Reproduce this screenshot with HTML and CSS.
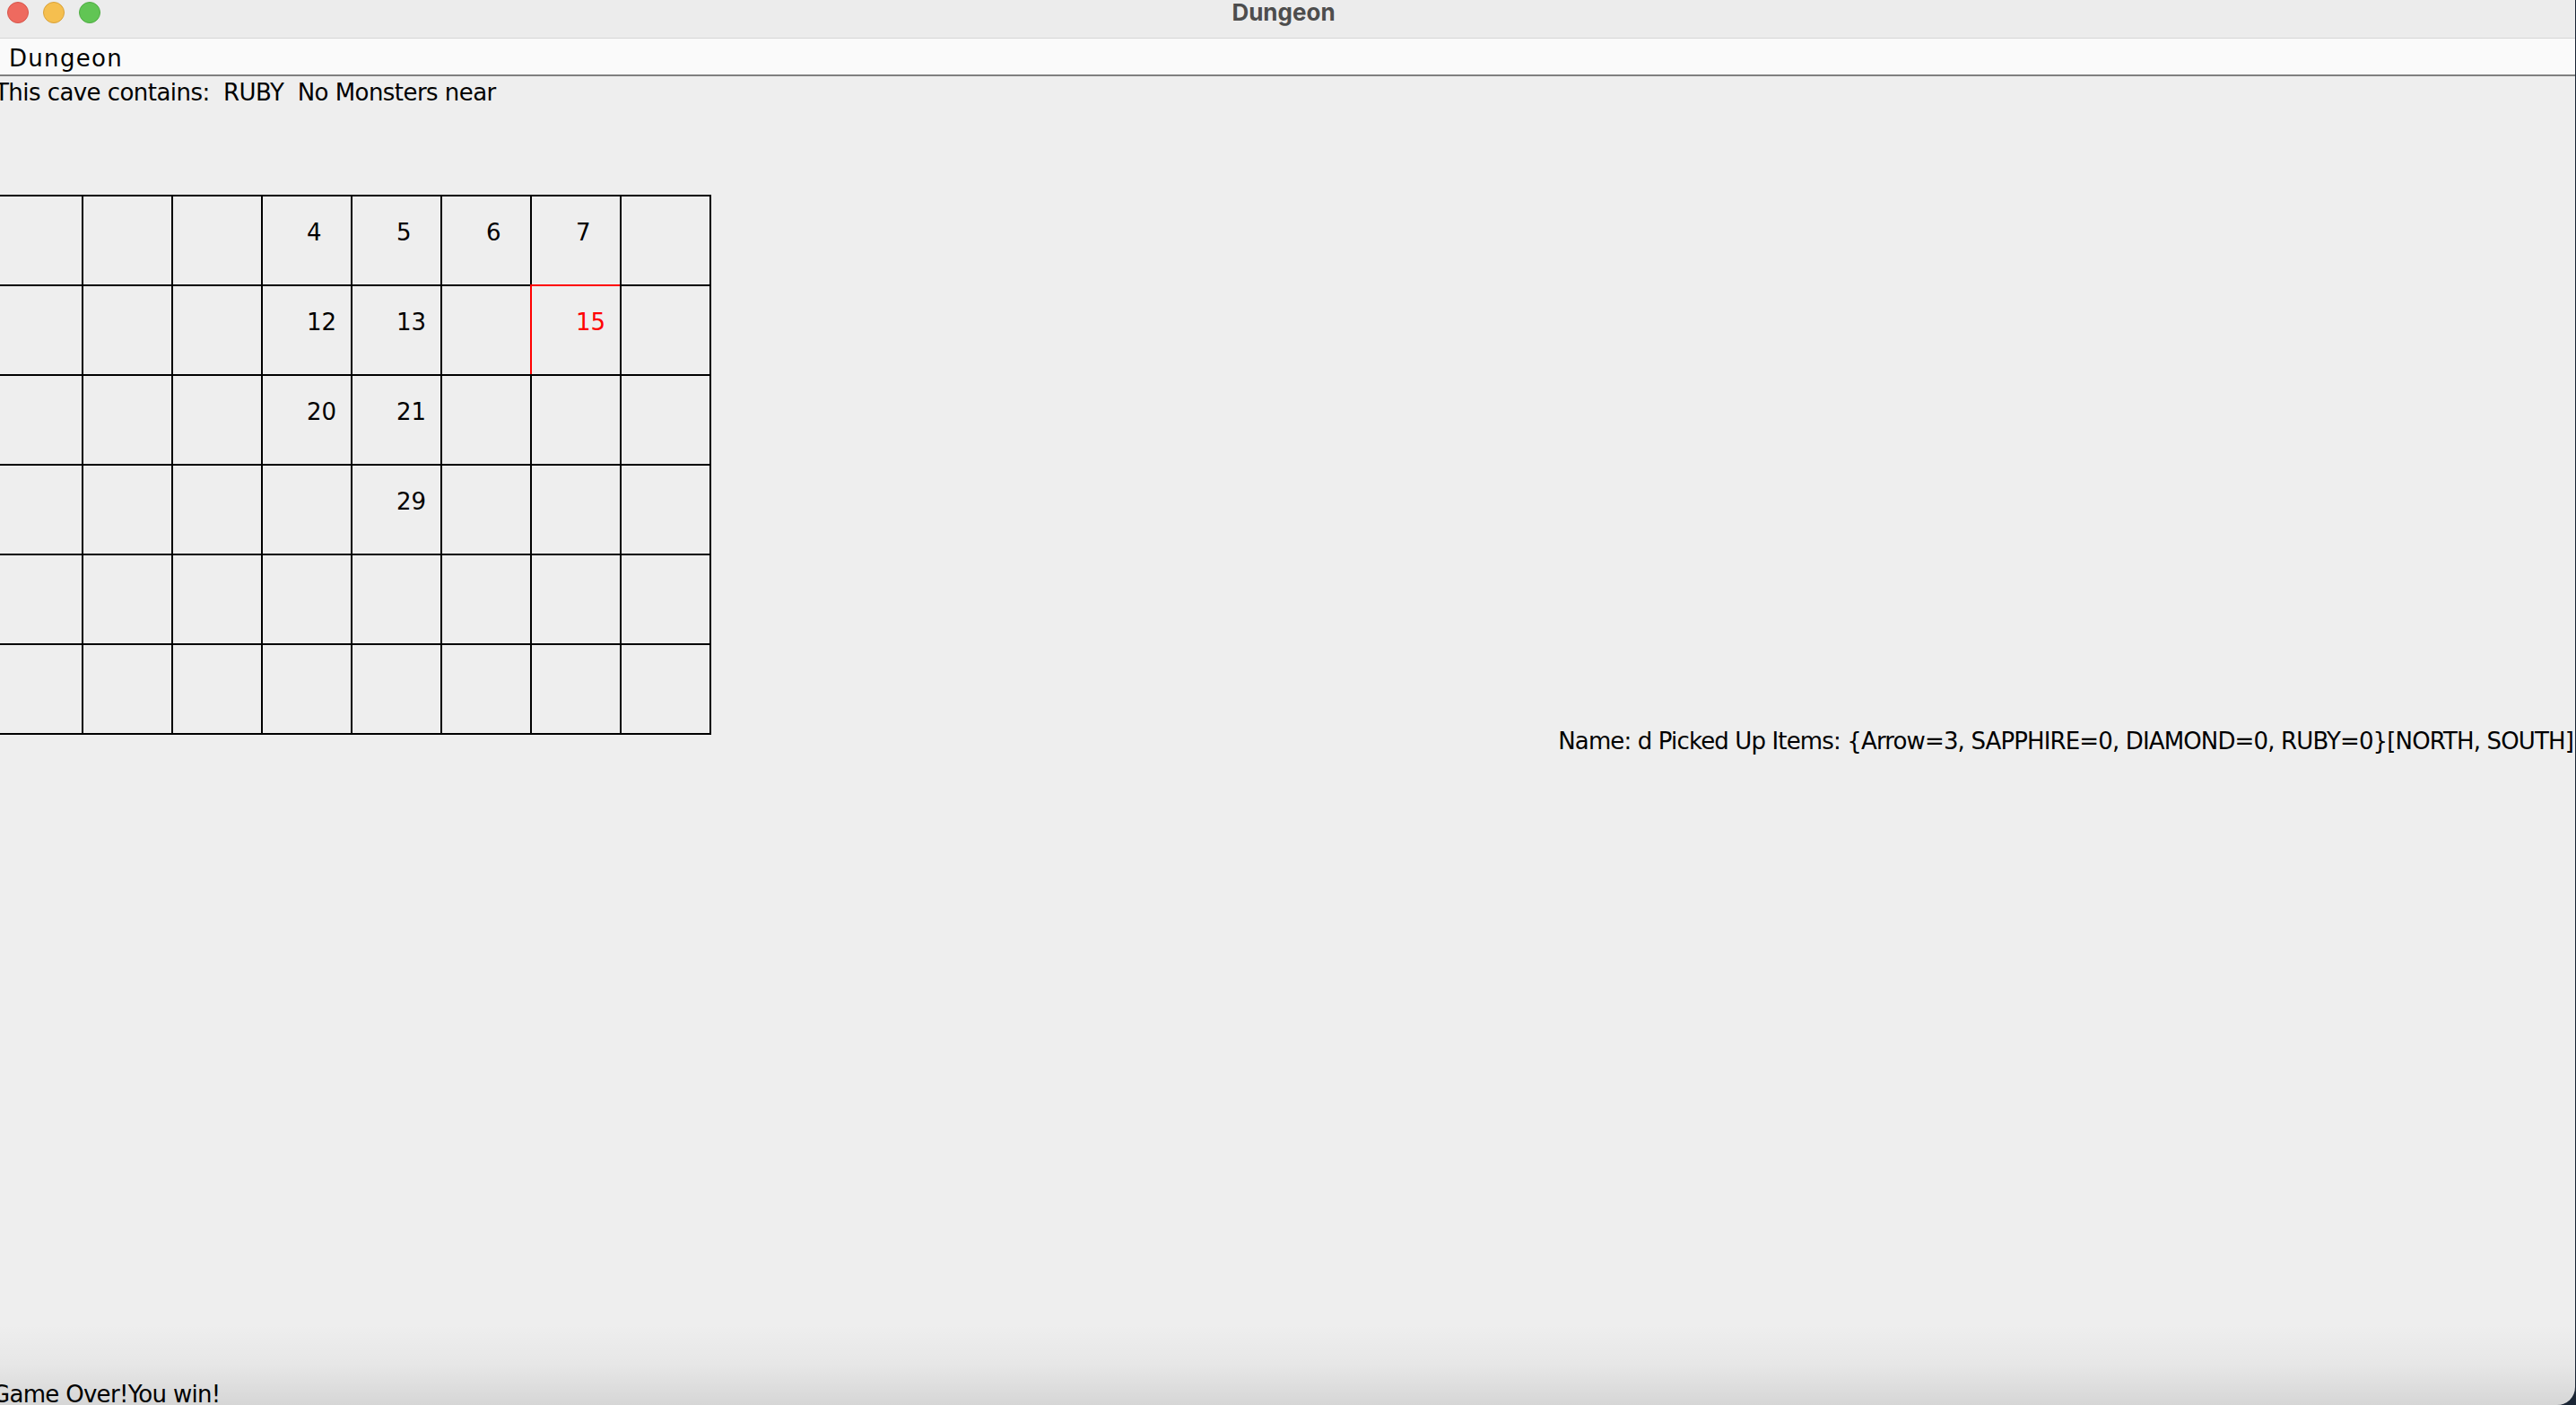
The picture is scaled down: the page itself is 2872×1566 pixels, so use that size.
FILE: index.html
```html
<!DOCTYPE html>
<html>
<head>
<meta charset="utf-8">
<title>Dungeon</title>
<link rel="stylesheet" href="styles.css">
</head>
<body>
<div class="window">
  <div class="titlebar">
    <div class="lights">
      <span class="light red"></span>
      <span class="light yellow"></span>
      <span class="light green"></span>
    </div>
    <div class="title">Dungeon</div>
  </div>
  <div class="menubar"><span class="menu">Dungeon</span></div>
  <div class="content">
    <div class="status">This cave contains:&nbsp; RUBY&nbsp; No Monsters near</div>
    <div class="main">
      <div class="grid">
        <div class="cell"></div><div class="cell"></div><div class="cell"></div><div class="cell">4</div><div class="cell">5</div><div class="cell">6</div><div class="cell">7</div><div class="cell"></div>
        <div class="cell"></div><div class="cell"></div><div class="cell"></div><div class="cell">12</div><div class="cell">13</div><div class="cell"></div><div class="cell current">15</div><div class="cell"></div>
        <div class="cell"></div><div class="cell"></div><div class="cell"></div><div class="cell">20</div><div class="cell">21</div><div class="cell"></div><div class="cell"></div><div class="cell"></div>
        <div class="cell"></div><div class="cell"></div><div class="cell"></div><div class="cell"></div><div class="cell">29</div><div class="cell"></div><div class="cell"></div><div class="cell"></div>
        <div class="cell"></div><div class="cell"></div><div class="cell"></div><div class="cell"></div><div class="cell"></div><div class="cell"></div><div class="cell"></div><div class="cell"></div>
        <div class="cell"></div><div class="cell"></div><div class="cell"></div><div class="cell"></div><div class="cell"></div><div class="cell"></div><div class="cell"></div><div class="cell"></div>
      </div>
      <div class="player">Name: d Picked Up Items: {Arrow=3, SAPPHIRE=0, DIAMOND=0, RUBY=0}[NORTH, SOUTH]</div>
    </div>
    <div class="footer">Game Over!You win!</div>
  </div>
  <div class="shade"></div>
</div>
</body>
</html>
```
FILE: styles.css
```css
html, body {
  margin: 0;
  padding: 0;
  background: #1b2635;
  overflow: hidden;
  height: 1566px;
}

.window {
  position: relative;
  margin-left: -9px;
  width: 2880px;
  height: 1566px;
  background: #eeeeee;
  border-bottom-right-radius: 20px;
  overflow: hidden;
  display: flex;
  flex-direction: column;
  font-family: "DejaVu Sans", "Liberation Sans", sans-serif;
  font-size: 26px;
  color: #000;
}

.titlebar {
  height: 42px;
  flex: none;
  background: #ececec;
  border-bottom: 1px solid #d6d6d6;
  display: flex;
  align-items: flex-start;
  justify-content: center;
  position: relative;
}

.lights {
  position: absolute;
  left: 17px;
  top: 2px;
  display: flex;
  gap: 16px;
}

.light {
  width: 24px;
  height: 24px;
  border-radius: 50%;
  box-sizing: border-box;
}
.light.red { background: #ee6a5f; border: 1px solid #d7564b; }
.light.yellow { background: #f5bf4f; border: 1px solid #d9a23a; }
.light.green { background: #61c554; border: 1px solid #4fac43; }

.title {
  font-family: "Inter", "Liberation Sans", sans-serif;
  font-weight: 700;
  font-size: 26px;
  line-height: 28px;
  color: #4d4d4d;
}

.menubar {
  flex: none;
  background: #fafafa;
  border-bottom: 2px solid #808080;
  box-sizing: border-box;
  height: 42px;
  padding: 6px 0 0 19px;
  line-height: 32px;
}

.menu {
  letter-spacing: 1.3px;
}

.content {
  flex: 1;
  display: flex;
  flex-direction: column;
  min-height: 0;
}

.status {
  margin-top: 2px;
  padding-left: 3px;
  line-height: 32px;
  white-space: nowrap;
  letter-spacing: -0.55px;
}

.main {
  margin-top: 98px;
  display: flex;
  align-items: flex-start;
  justify-content: space-between;
}

.grid {
  display: grid;
  grid-template-columns: repeat(8, 100px);
  grid-template-rows: repeat(6, 100px);
  border-right: 2px solid #000;
  border-bottom: 2px solid #000;
  flex: none;
}

.cell {
  box-sizing: border-box;
  border-top: 2px solid #000;
  border-left: 2px solid #000;
  padding: 27px 0 0 49px;
  line-height: 26px;
}

.cell.current {
  border-color: #ff0000;
  color: #ff0000;
}

.player {
  margin-top: 593px;
  margin-right: 2px;
  line-height: 32px;
  white-space: nowrap;
  letter-spacing: -0.86px;
}

.footer {
  margin-top: auto;
  margin-bottom: -4px;
  line-height: 32px;
  white-space: nowrap;
  letter-spacing: -0.7px;
}

.shade {
  position: absolute;
  left: 0;
  right: 0;
  bottom: 0;
  height: 90px;
  background: linear-gradient(to bottom, rgba(0,0,0,0) 0%, rgba(0,0,0,0.03) 50%, rgba(0,0,0,0.1) 100%);
  pointer-events: none;
}
```
